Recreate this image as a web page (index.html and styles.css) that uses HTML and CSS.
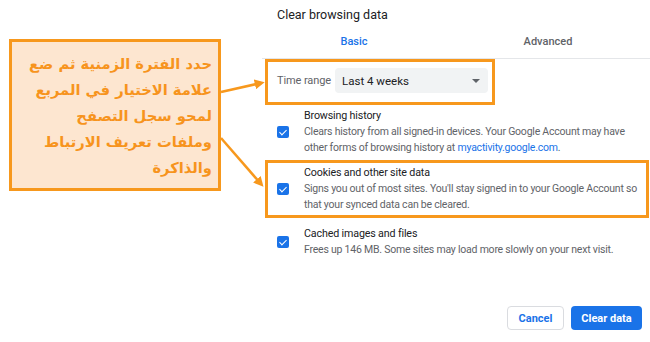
FILE: index.html
```html
<!DOCTYPE html>
<html lang="en">
<head>
  <meta charset="UTF-8">
  <title>Clear browsing data</title>
  <link rel="stylesheet" href="styles.css">
</head>
<body>
  <div class="note">
    <div class="note-box" dir="rtl" lang="ar">
      حدد الفترة الزمنية ثم ضع<br>
      علامة الاختيار في المربع<br>
      لمحو سجل التصفح<br>
      وملفات تعريف الارتباط<br>
      والذاكرة
    </div>
  </div>

  <div class="dialog">
    <h1 class="title">Clear browsing data</h1>

    <div class="tabs">
      <div class="tab active">Basic</div>
      <div class="tab">Advanced</div>
    </div>

    <div class="range marked">
      <span class="range-label">Time range</span>
      <div class="select">
        <span>Last 4 weeks</span>
        <span class="caret"></span>
      </div>
    </div>

    <div class="option">
      <span class="check"></span>
      <div class="option-text">
        <div class="option-title">Browsing history</div>
        <div class="option-desc">Clears history from all signed-in devices. Your Google Account may have other forms of browsing history at <a href="#">myactivity.google.com</a>.</div>
      </div>
    </div>

    <div class="option marked">
      <span class="check"></span>
      <div class="option-text">
        <div class="option-title">Cookies and other site data</div>
        <div class="option-desc">Signs you out of most sites. You'll stay signed in to your Google Account so that your synced data can be cleared.</div>
      </div>
    </div>

    <div class="option">
      <span class="check"></span>
      <div class="option-text">
        <div class="option-title">Cached images and files</div>
        <div class="option-desc">Frees up 146 MB. Some sites may load more slowly on your next visit.</div>
      </div>
    </div>

    <div class="actions">
      <button class="btn btn-cancel">Cancel</button>
      <button class="btn btn-primary">Clear data</button>
    </div>
  </div>

  <svg class="arrows" width="650" height="342" viewBox="0 0 650 342">
    <defs>
      <marker id="head" markerWidth="4" markerHeight="4" refX="2.5" refY="2" orient="auto">
        <path d="M0,0 L4,2 L0,4 z" fill="#f7981d"/>
      </marker>
    </defs>
    <line x1="221" y1="92" x2="261" y2="83" stroke="#f7981d" stroke-width="2.5" marker-end="url(#head)"/>
    <line x1="221" y1="138" x2="261" y2="184" stroke="#f7981d" stroke-width="2.5" marker-end="url(#head)"/>
  </svg>
</body>
</html>
```

FILE: styles.css
```css
* {
  margin: 0;
  padding: 0;
  box-sizing: border-box;
}

body {
  display: flex;
  width: 650px;
  height: 342px;
  overflow: hidden;
  background-color: #ffffff;
  font-family: Roboto, "Liberation Sans", Arial, sans-serif;
  color: #202124;
  position: relative;
}

.note {
  width: 262px;
  flex-shrink: 0;
  padding: 39px 0 0 9px;
}

.note-box {
  width: 212px;
  height: 152px;
  background: #fde6d0;
  border: 3px solid #f7981d;
  padding: 9px 6px 0 0;
  color: #f7941d;
  font-family: "DejaVu Sans", sans-serif;
  font-weight: bold;
  font-size: 14.7px;
  line-height: 26px;
  text-align: right;
  white-space: nowrap;
}

.dialog {
  flex: 1;
  display: flex;
  flex-direction: column;
  padding: 0 8px 12px 0;
}

.title {
  font-size: 12.5px;
  font-weight: normal;
  line-height: 16px;
  padding: 7px 0 0 15px;
}

.tabs {
  display: grid;
  grid-template-columns: 184px 1fr;
  margin-right: -8px;
  border-bottom: 1px solid #e4e6e9;
  height: 36px;
}

.tab {
  text-align: center;
  font-size: 11px;
  font-weight: 500;
  line-height: 16px;
  padding-top: 11px;
  color: #5f6368;
}

.tab.active {
  color: #1a73e8;
}

.marked {
  border: 3px solid #f7981d;
}

.range {
  display: flex;
  align-items: center;
  width: 230px;
  height: 46px;
  margin: 0 0 0 3px;
  padding: 0 0 0 9px;
}

.range-label {
  font-size: 11px;
  letter-spacing: -0.1px;
  color: #5f6368;
  width: 58px;
  margin-top: -3px;
}

.select {
  display: flex;
  align-items: center;
  justify-content: space-between;
  width: 153px;
  height: 25px;
  margin-top: -3px;
  background: #f1f3f4;
  border-radius: 4px;
  padding: 0 8px 0 7px;
  font-size: 11.5px;
  color: #202124;
}

.caret {
  width: 0;
  height: 0;
  border-left: 4px solid transparent;
  border-right: 4px solid transparent;
  border-top: 4px solid #5f6368;
}

.option {
  display: flex;
  align-items: center;
  margin-left: 3px;
  padding: 0 0 0 9px;
  border: 3px solid transparent;
}

.option + .option {
  margin-top: 5px;
}

.option.marked {
  border-color: #f7981d;
  padding: 2px 0 2px 9px;
  margin-top: 1px;
  margin-right: -7px;
}

.check {
  width: 12px;
  height: 12px;
  flex-shrink: 0;
  border-radius: 2px;
  background: #1a73e8;
  position: relative;
  margin-right: 15px;
}

.check::after {
  content: '';
  position: absolute;
  left: 4px;
  top: 1.5px;
  width: 3px;
  height: 6px;
  border: solid #ffffff;
  border-width: 0 1.5px 1.5px 0;
  transform: rotate(45deg);
}

.option-title {
  font-size: 10.7px;
  letter-spacing: -0.15px;
  line-height: 16px;
  color: #202124;
}

.option-desc {
  font-size: 10.5px;
  letter-spacing: -0.22px;
  line-height: 16px;
  color: #5f6368;
}

.option-desc a {
  color: #1a73e8;
  text-decoration: none;
}

.actions {
  margin-top: auto;
  display: flex;
  justify-content: flex-end;
  gap: 7px;
}

.btn {
  height: 24px;
  border-radius: 4px;
  font-family: inherit;
  font-size: 11px;
  font-weight: bold;
  cursor: pointer;
}

.btn-cancel {
  width: 57px;
  background: #ffffff;
  border: 1px solid #dadce0;
  color: #1a73e8;
}

.btn-primary {
  width: 71px;
  background: #1a73e8;
  border: none;
  color: #ffffff;
}

.arrows {
  position: absolute;
  left: 0;
  top: 0;
  pointer-events: none;
}
```
